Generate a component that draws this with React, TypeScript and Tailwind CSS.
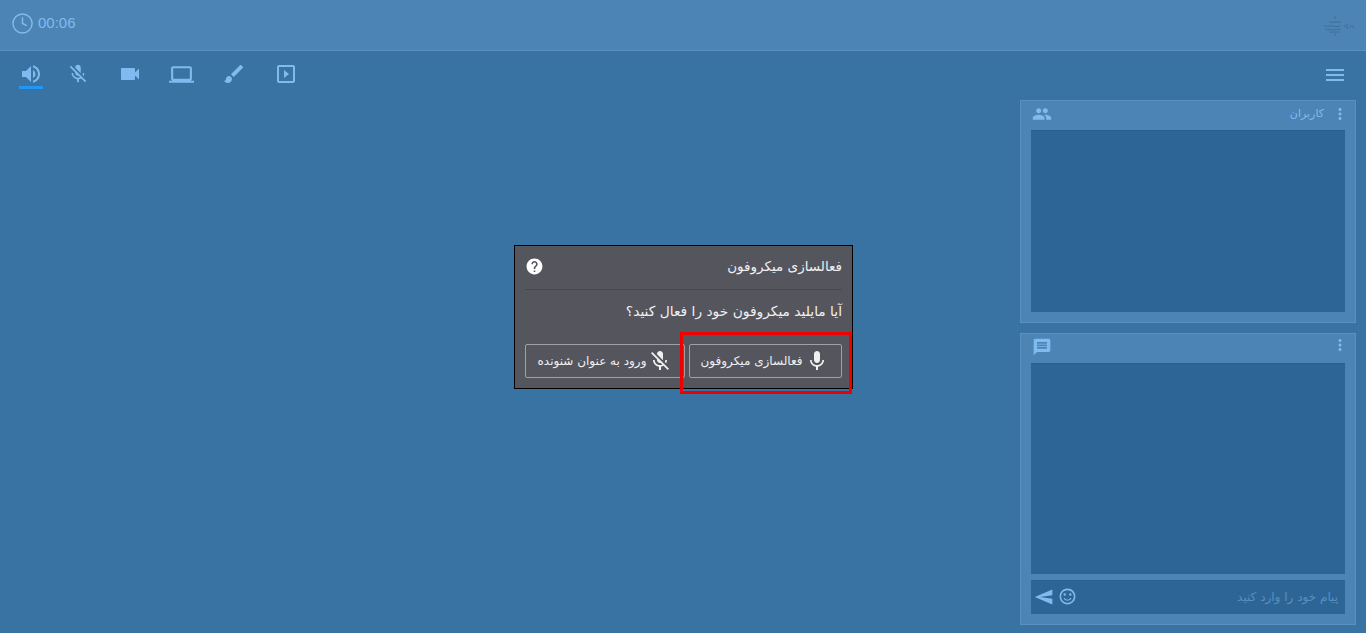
import React from 'react';
import { Clock } from 'lucide-react';
import {
  MdVolumeUp,
  MdMicOff,
  MdMic,
  MdVideocam,
  MdLaptop,
  MdBrush,
  MdOutlineSlideshow,
  MdMenu,
  MdPeople,
  MdMessage,
  MdMoreVert,
  MdHelp,
  MdSend,
  MdOutlineSentimentSatisfiedAlt,
} from 'react-icons/md';

function ToolButton({ children, active }: { children: React.ReactNode; active?: boolean }) {
  return (
    <div className="relative w-[25px] h-[38px] pt-[8px] flex items-center justify-center">
      {children}
      {active && <div className="absolute left-[1px] right-0 bottom-0 h-[3px] bg-[#2196f3]"></div>}
    </div>
  );
}

export default function App() {
  return (
    <div className="relative w-full h-[633px] overflow-hidden bg-[#3873a3] text-[#80bbf0] font-['DejaVu_Sans',sans-serif]">
      {/* Top bar */}
      <div className="h-[51px] bg-[#4c84b5] border-b border-[#5a90bf] flex items-center justify-between pl-[11px] pr-[11px]">
        <div className="flex items-center gap-[4px] pb-[3px]">
          <Clock className="w-[23px] h-[23px]" strokeWidth={1.5} />
          <span className="text-[15px] font-['Liberation_Sans',sans-serif]">00:06</span>
        </div>
        <svg width="32" height="20" viewBox="0 0 32 20" className="text-[#34688f] mt-[2px]" fill="none" stroke="currentColor" strokeWidth="0.7">
          <path d="M12 0v3M6 6h12M1 10c4 1 6-1 9 0s6 1 8-1M2 13c5 1 9 1 16 0M6 16h11M12 17v3" />
          <path d="M21 11l1-2M24 13V8M26 12c1 0 2-1 2-3M30 12V9" />
        </svg>
      </div>

      {/* Toolbar */}
      <div className="h-[49px] flex items-start justify-between pl-[18px] pr-[19px]">
        <div className="flex items-start gap-[27px]">
          <div className="mr-[-5px]">
            <ToolButton active><MdVolumeUp size={24} /></ToolButton>
          </div>
          <ToolButton><MdMicOff size={22} /></ToolButton>
          <ToolButton><MdVideocam size={24} /></ToolButton>
          <ToolButton><MdLaptop size={27} /></ToolButton>
          <ToolButton><MdBrush size={24} /></ToolButton>
          <ToolButton><MdOutlineSlideshow size={24} /></ToolButton>
        </div>
        <div className="h-[48px] flex items-center">
          <MdMenu size={24} />
        </div>
      </div>

      {/* Body */}
      <div className="flex justify-end pr-[10px]">
        <div className="w-[336px] flex flex-col gap-[10px]">
          <div className="h-[223px] bg-[#4c84b5] border border-[#5a90bf] px-[10px] flex flex-col">
            <div className="h-[29px] pb-[4px] flex items-center justify-between pl-[1px]">
              <MdPeople size={20} />
              <div className="flex items-center gap-[7px]">
                <span dir="rtl" className="text-[11px] pt-[1px]">کاربران</span>
                <MdMoreVert size={18} className="-mr-[4px]" />
              </div>
            </div>
            <div className="h-[182px] bg-[#2d6696] border-t border-[#28608e]"></div>
          </div>

          <div className="h-[292px] bg-[#4c84b5] border border-[#5a90bf] px-[10px] flex flex-col">
            <div className="h-[29px] pb-[4px] flex items-center justify-between pl-[1px]">
              <MdMessage size={20} />
              <MdMoreVert size={18} className="-mr-[4px] -mt-[3px]" />
            </div>
            <div className="h-[211px] bg-[#2d6696] border-t border-[#28608e]"></div>
            <div className="mt-[6px] h-[34px] pb-[2px] bg-[#2d6696] border-t border-[#28608e] flex items-center justify-between pl-[3px] pr-[7px]">
              <div className="flex items-center gap-[4px]">
                <MdSend size={20} className="rotate-180" />
                <MdOutlineSentimentSatisfiedAlt size={19} />
              </div>
              <span dir="rtl" className="text-[12px] text-[#568fc2]">پیام خود را وارد کنید</span>
            </div>
          </div>
        </div>
      </div>

      {/* Dialog */}
      <div dir="rtl" className="absolute left-[514px] top-[245px] w-[339px] h-[144px] bg-[#55555e] border border-black px-[10px] text-[#f0f0f0]">
        <div className="h-[44px] pb-[2px] flex items-center justify-between border-b border-[#47474f]">
          <span className="text-[13.5px]">فعالسازی میکروفون</span>
          <MdHelp size={19} className="text-white" />
        </div>
        <p className="h-[42px] pt-[11px] text-[13.8px] leading-[21px]">آیا مایلید میکروفون خود را فعال کنید؟</p>
        <div className="mt-[12px] flex gap-[4px]">
          <button className="w-[153px] h-[34px] pr-[2px] border border-[#a0a0a6] rounded-[2px] flex items-center justify-center gap-[2px] text-[12px]">
            <MdMic size={24} />
            فعالسازی میکروفون
          </button>
          <button className="w-[160px] h-[34px] border border-[#a0a0a6] rounded-[2px] flex items-center justify-center gap-[2px] text-[12px]">
            <MdMicOff size={24} />
            ورود به عنوان شنونده
          </button>
        </div>
      </div>

      {/* Red annotation box */}
      <div className="absolute left-[680px] top-[332px] w-[172px] h-[62px] border-[3px] border-[#ee0000]"></div>
    </div>
  );
}
